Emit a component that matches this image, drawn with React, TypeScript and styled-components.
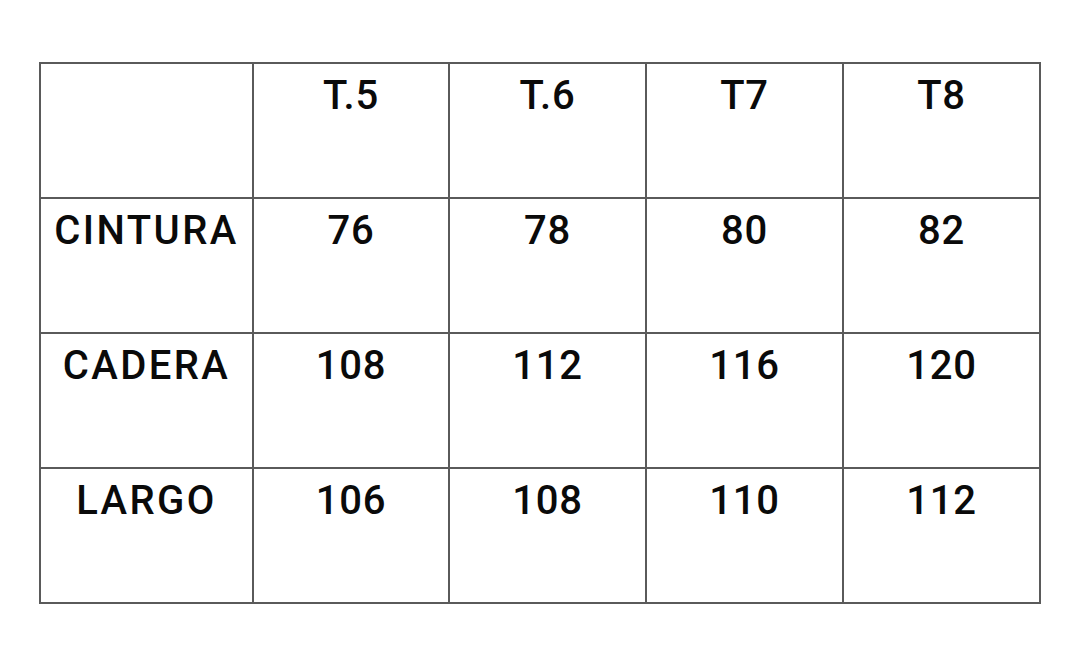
import React from "react";
import styled, { createGlobalStyle } from "styled-components";

const Global = createGlobalStyle`
  html, body { margin: 0; padding: 0; background: #ffffff; }
  body { font-family: Roboto, "Noto Sans", Arial, sans-serif; }
`;

const Page = styled.div`
  width: 1080px;
  height: 668px;
  padding: 62px 0 0 39px;
  box-sizing: border-box;
  background: #ffffff;
`;

const Grid = styled.div`
  display: grid;
  grid-template-columns: 213px 196px 197px 197px 197px;
  grid-auto-rows: 135px;
  width: max-content;
  border-top: 2px solid #5a5a5a;
  border-left: 2px solid #5a5a5a;
`;

const Cell = styled.div<{ $label?: boolean }>`
  box-sizing: border-box;
  border-right: 2px solid #5a5a5a;
  border-bottom: 2px solid #5a5a5a;
  display: flex;
  justify-content: center;
  align-items: flex-start;
  padding-top: 8px;
  font-family: Roboto, "Noto Sans", sans-serif;
  font-size: 40px;
  font-weight: 500;
  color: #0a0a0a;
  letter-spacing: ${(p) => (p.$label ? "2.4px" : "0.8px")};
`;

const header = ["", "T.5", "T.6", "T7", "T8"];
const rows: [string, string[]][] = [
  ["CINTURA", ["76", "78", "80", "82"]],
  ["CADERA", ["108", "112", "116", "120"]],
  ["LARGO", ["106", "108", "110", "112"]],
];

export default function App() {
  return (
    <>
      <Global />
      <Page>
        <Grid>
          {header.map((h, i) => (
            <Cell key={`h${i}`}>{h}</Cell>
          ))}
          {rows.map(([label, vals]) => (
            <React.Fragment key={label}>
              <Cell $label>{label}</Cell>
              {vals.map((v, j) => (
                <Cell key={j}>{v}</Cell>
              ))}
            </React.Fragment>
          ))}
        </Grid>
      </Page>
    </>
  );
}
